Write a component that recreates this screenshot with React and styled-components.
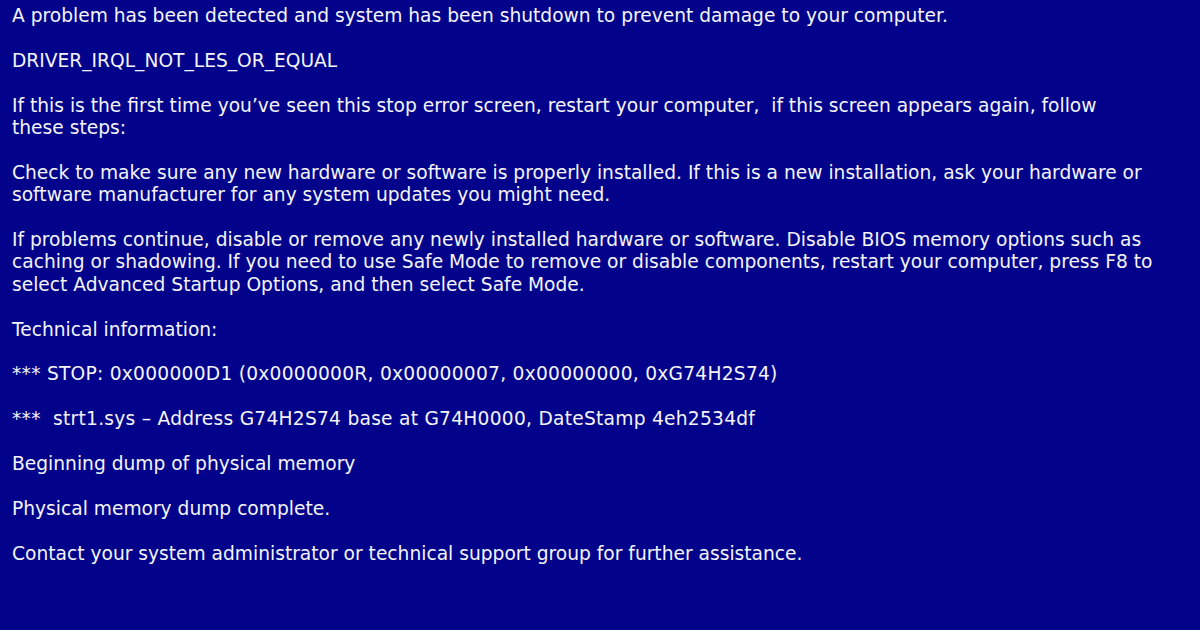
import React from 'react'
import styled, { createGlobalStyle } from 'styled-components'

const GlobalStyle = createGlobalStyle`
  html, body {
    margin: 0;
    padding: 0;
    background: #02028a;
  }
`

// $narrow: wraps earlier like the original; $code: the stop-code lines run a bit wider
const paragraphs = [
  { text: 'A problem has been detected and system has been shutdown to prevent damage to your computer.' },
  { text: 'DRIVER_IRQL_NOT_LES_OR_EQUAL' },
  { text: 'If this is the first time you\u2019ve seen this stop error screen, restart your computer,\u00a0 if this screen appears again, follow these steps:', narrow: true },
  { text: 'Check to make sure any new hardware or software is properly installed. If this is a new installation, ask your hardware or software manufacturer for any system updates you might need.' },
  { text: 'If problems continue, disable or remove any newly installed hardware or software. Disable BIOS memory options such as caching or shadowing. If you need to use Safe Mode to remove or disable components, restart your computer, press F8 to select Advanced Startup Options, and then select Safe Mode.' },
  { text: 'Technical information:' },
  { text: '*** STOP: 0x000000D1 (0x0000000R, 0x00000007, 0x00000000, 0xG74H2S74)', code: true },
  { text: '***\u00a0 strt1.sys \u2013 Address G74H2S74 base at G74H0000, DateStamp 4eh2534df', code: true },
  { text: 'Beginning dump of physical memory' },
  { text: 'Physical memory dump complete.' },
  { text: 'Contact your system administrator or technical support group for further assistance.' },
]

function App() {
  return (
    <>
      <GlobalStyle />
      <Screen>
        {paragraphs.map((p, i) => (
          <Line key={i} $narrow={p.narrow} $code={p.code}>{p.text}</Line>
        ))}
      </Screen>
    </>
  )
}

const Screen = styled.div`
  width: 1200px;
  height: 630px;
  box-sizing: border-box;
  padding: 5px 34px 0 12px;
  background: #02028a;
  color: #f4f4fa;
  font-family: Verdana, "DejaVu Sans", sans-serif;
  font-size: 18.65px;
  line-height: 22.4px;
  overflow: hidden;
`

const Line = styled.p`
  margin: 0 0 22.4px;
  max-width: ${p => (p.$narrow ? '1110px' : 'none')};
  letter-spacing: ${p => (p.$code ? '0.25px' : 'normal')};
`

export default App
